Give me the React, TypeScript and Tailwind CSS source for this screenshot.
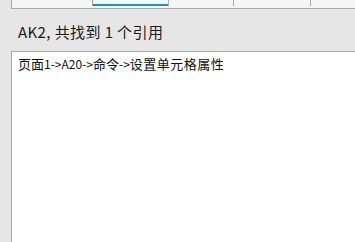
import React from "react";

export default function App() {
  return (
    <div
      className="w-[355px] h-[242px] bg-[#e6e6e6] overflow-hidden flex flex-col"
      style={{ fontFamily: '"Noto Sans CJK SC", "Noto Sans", sans-serif' }}
    >
      <div className="ml-[11px] h-[9px] shrink-0 bg-[#f5f5f5] border-l border-b border-[#a9a9a9] flex items-start">
        <div className="w-[80px] h-[6px]" />
        <div className="w-[77px] h-[6px] border-l border-r border-[#a9a9a9] flex items-end">
          <div className="w-full h-[2px] bg-[#0f94d8]" />
        </div>
        <div className="w-[65px] h-[6px] border-r border-[#a9a9a9]" />
        <div className="w-[77px] h-[6px] border-r border-[#a9a9a9]" />
      </div>
      <div className="h-[42px] shrink-0 pl-[18px] pt-[12px] text-[15px] leading-[21px] tracking-[0.4px] text-[#1a1a1a]">
        AK2, 共找到 1 个引用
      </div>
      <div className="ml-[11px] flex-1 bg-white border-l border-t border-[#a9a9a9] pl-[6px] pt-[4px] text-[13px] leading-[16px] text-[#111]">
        页面<span className="text-[12px]">1-&gt;A20-&gt;</span>命令<span className="text-[12px]">-&gt;</span>
        <span className="tracking-[0.5px]">设置单元格属性</span>
      </div>
    </div>
  );
}
